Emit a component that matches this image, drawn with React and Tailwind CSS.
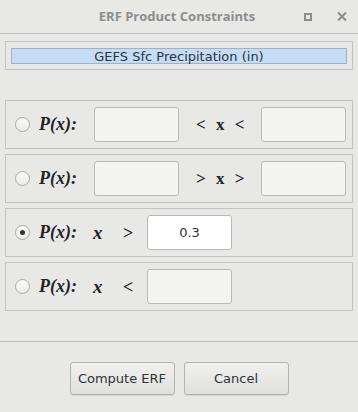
import React, { useState } from "react";

const serif = { fontFamily: '"Liberation Serif", "DejaVu Serif", serif' };

function Radio({ checked, onClick }) {
  return (
    <button
      onClick={onClick}
      className="w-[15px] h-[15px] rounded-full border border-[#a9aaa8] bg-gradient-to-b from-[#fbfbfa] to-[#ebebea] flex items-center justify-center shrink-0"
    >
      {checked && <span className="w-[5px] h-[5px] rounded-full bg-[#2e3436]" />}
    </button>
  );
}

function Field({ value, active, onChange }) {
  return (
    <input
      value={value}
      onChange={(e) => onChange(e.target.value)}
      disabled={!active}
      className={`w-[85px] h-[35px] rounded-[3px] border border-[#b9bab7] px-[10px] text-center text-[13px] text-[#2e3436] outline-none ${active ? "bg-white" : "bg-[#f4f4f3]"}`}
    />
  );
}

function Px() {
  return (
    <span className="text-[18px] font-bold italic text-[#1f2426] w-[40px] leading-none" style={serif}>
      P(x):
    </span>
  );
}

function App() {
  const [mode, setMode] = useState(2);
  const [vals, setVals] = useState({ a: "", b: "", c: "", d: "", e: "0.3", f: "" });
  const set = (k) => (v) => setVals({ ...vals, [k]: v });

  const row = "h-[49px] border border-[#c2c2c0] flex items-center pl-[9px]";

  return (
    <div className="w-[358px] h-[412px] bg-[#e8e8e7] text-[#2e3436] overflow-hidden" style={{ fontFamily: '"DejaVu Sans", sans-serif' }}>
      <div className="h-[34px] border-b border-[#bdbdbb] relative flex items-center justify-center">
        <span className="text-[13px] font-bold text-[#8b8e8f] -ml-[4px]" style={{ fontFamily: '"Open Sans", "Noto Sans", sans-serif' }}>
          ERF Product Constraints
        </span>
        <span className="absolute left-[304px] top-[13px] w-[8px] h-[8px] border-2 border-[#8b8e8f]" />
        <svg className="absolute left-[337px] top-[12px]" width="10" height="9" viewBox="0 0 10 9">
          <path d="M1 0.5 L9 8.5 M9 0.5 L1 8.5" stroke="#8b8e8f" strokeWidth="2" />
        </svg>
      </div>

      <div className="px-[5px]">
        <div className="mt-[7px] h-[29px] border border-[#c2c2c0] px-[5px] pt-[6px]">
          <div className="h-[16px] bg-[#c5dcf7] border border-[#9db1c9] flex items-center justify-center text-[13px] leading-none">
            GEFS Sfc Precipitation (in)
          </div>
        </div>

        <div className="mt-[30px] flex flex-col gap-[5px]">
          <div className={row}>
            <Radio checked={mode === 0} onClick={() => setMode(0)} />
            <span className="ml-[9px]"><Px /></span>
            <span className="ml-[17px]"><Field value={vals.a} active={mode === 0} onChange={set("a")} /></span>
            <span className="ml-[17px] w-[53px] text-[17px] font-bold tracking-[3px] leading-none text-[#1f2426]" style={serif}>&lt; x &lt;</span>
            <span className="ml-[12px]"><Field value={vals.b} active={mode === 0} onChange={set("b")} /></span>
          </div>
          <div className={row}>
            <Radio checked={mode === 1} onClick={() => setMode(1)} />
            <span className="ml-[9px]"><Px /></span>
            <span className="ml-[17px]"><Field value={vals.c} active={mode === 1} onChange={set("c")} /></span>
            <span className="ml-[17px] w-[53px] text-[17px] font-bold tracking-[3px] leading-none text-[#1f2426]" style={serif}>&gt; x &gt;</span>
            <span className="ml-[12px]"><Field value={vals.d} active={mode === 1} onChange={set("d")} /></span>
          </div>
          <div className={row}>
            <Radio checked={mode === 2} onClick={() => setMode(2)} />
            <span className="ml-[9px]"><Px /></span>
            <span className="ml-[16px] w-[30px] text-[19px] font-bold italic leading-none text-[#1f2426]" style={serif}>x</span>
            <span className="w-[24px] text-[18px] font-bold leading-none text-[#1f2426]" style={serif}>&gt;</span>
            <Field value={vals.e} active={mode === 2} onChange={set("e")} />
          </div>
          <div className={row}>
            <Radio checked={mode === 3} onClick={() => setMode(3)} />
            <span className="ml-[9px]"><Px /></span>
            <span className="ml-[16px] w-[30px] text-[19px] font-bold italic leading-none text-[#1f2426]" style={serif}>x</span>
            <span className="w-[24px] text-[18px] font-bold leading-none text-[#1f2426]" style={serif}>&lt;</span>
            <Field value={vals.f} active={mode === 3} onChange={set("f")} />
          </div>
        </div>
      </div>

      <div className="mt-[30px] border-t border-[#bdbdbb] flex justify-center gap-[9px] pt-[20px]">
        <button className="w-[105px] h-[33px] rounded-[3px] border border-[#b3b3b0] bg-gradient-to-b from-[#f0f0ef] to-[#e0e0de] text-[13px] text-[#2e3436] shadow-[0_1px_0_rgba(0,0,0,0.08)]">
          Compute ERF
        </button>
        <button className="w-[105px] h-[33px] rounded-[3px] border border-[#b3b3b0] bg-gradient-to-b from-[#f0f0ef] to-[#e0e0de] text-[13px] text-[#2e3436] shadow-[0_1px_0_rgba(0,0,0,0.08)]">
          Cancel
        </button>
      </div>
    </div>
  );
}

export default App;
